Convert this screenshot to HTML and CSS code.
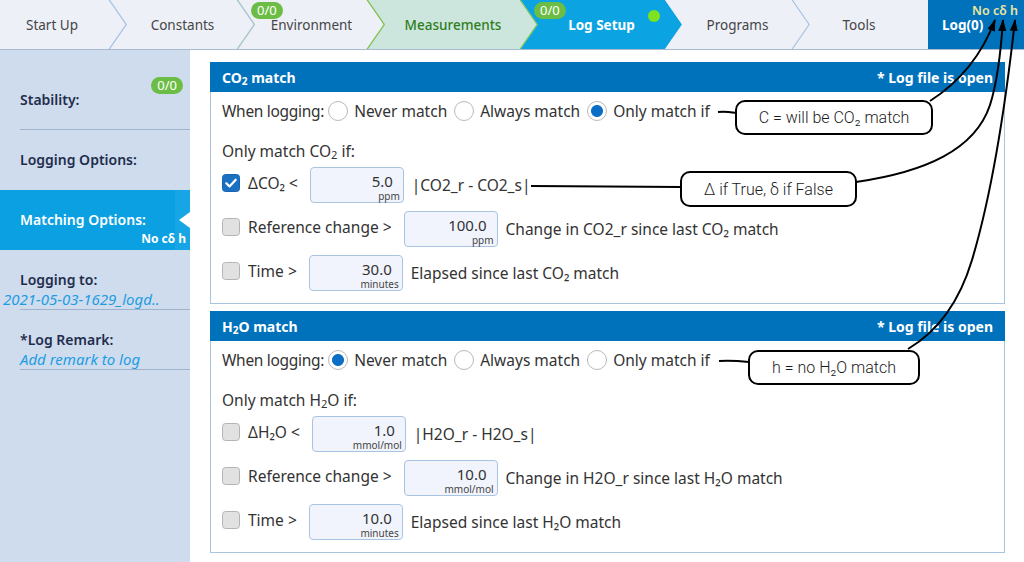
FILE: index.html
```html
<!DOCTYPE html>
<html lang="en">
<head>
<meta charset="utf-8">
<title>Log Setup – Matching Options</title>
<link rel="stylesheet" href="styles.css">
</head>
<body>
<div class="app">
  <nav class="topbar">
    <div class="tabs">
      <div class="tab tab-first line-blue w-startup"><div class="fill">Start Up</div></div>
      <div class="tab line-blue w-constants"><div class="fill">Constants</div></div>
      <div class="tab line-green w-env"><div class="fill">Environment<span class="badge nav-badge">0/0</span></div></div>
      <div class="tab line-green w-meas"><div class="fill fill-green">Measurements</div></div>
      <div class="tab line-none w-logsetup"><div class="fill fill-blue">Log Setup<span class="badge nav-badge">0/0</span><span class="dot"></span></div></div>
      <div class="tab line-blue w-programs"><div class="fill">Programs</div></div>
      <div class="tab tab-last w-tools"><div class="fill">Tools</div></div>
    </div>
    <div class="logbox"><span class="logstate">No cδ h</span><span class="logtitle">Log(0)</span></div>
  </nav>

  <div class="main">
    <aside class="sidebar">
      <div class="item"><span class="label">Stability:</span><span class="badge side-badge">0/0</span></div>
      <div class="item noline"><span class="label">Logging Options:</span></div>
      <div class="item active"><span class="label">Matching Options:</span><span class="sub">No cδ h</span></div>
      <div class="item"><span class="label">Logging to:</span><span class="link file">2021-05-03-1629_logd..</span></div>
      <div class="item"><span class="label">*Log Remark:</span><span class="link">Add remark to log</span></div>
    </aside>

    <div class="content">
      <section class="panel">
        <header class="phead"><span>CO<sub>2</sub> match</span><span>* Log file is open</span></header>
        <div class="pbody">
          <div class="when">
            <span class="wlabel">When logging:</span>
            <span class="radio"></span><span class="ropt">Never match</span>
            <span class="radio"></span><span class="ropt">Always match</span>
            <span class="radio on"></span><span class="ropt">Only match if</span>
          </div>
          <div class="subhead">Only match CO<sub>2</sub> if:</div>
          <div class="crow first">
            <svg class="check" viewBox="0 0 18 18"><rect x="0.5" y="0.5" width="17" height="17" rx="3" fill="#1b70c2" stroke="#1664b2"/><path d="M4.3 9.3 L7.5 12.4 L13.7 5.7" fill="none" stroke="#fff" stroke-width="2.2" stroke-linecap="round" stroke-linejoin="round"/></svg>
            <span class="clabel">ΔCO₂ &lt;</span>
            <div class="num"><span class="v">5.0</span><span class="u">ppm</span></div>
            <span class="desc">|CO2_r - CO2_s|</span>
          </div>
          <div class="crow">
            <svg class="check" viewBox="0 0 18 18"><rect x="0.5" y="0.5" width="17" height="17" rx="3" fill="#e1e1e1" stroke="#b4b4b4"/></svg>
            <span class="clabel">Reference change &gt;</span>
            <div class="num"><span class="v">100.0</span><span class="u">ppm</span></div>
            <span class="desc">Change in CO2_r since last CO₂ match</span>
          </div>
          <div class="crow">
            <svg class="check" viewBox="0 0 18 18"><rect x="0.5" y="0.5" width="17" height="17" rx="3" fill="#e1e1e1" stroke="#b4b4b4"/></svg>
            <span class="clabel">Time &gt;</span>
            <div class="num"><span class="v">30.0</span><span class="u">minutes</span></div>
            <span class="desc">Elapsed since last CO₂ match</span>
          </div>
        </div>
      </section>

      <section class="panel">
        <header class="phead"><span>H<sub>2</sub>O match</span><span>* Log file is open</span></header>
        <div class="pbody">
          <div class="when">
            <span class="wlabel">When logging:</span>
            <span class="radio on"></span><span class="ropt">Never match</span>
            <span class="radio"></span><span class="ropt">Always match</span>
            <span class="radio"></span><span class="ropt">Only match if</span>
          </div>
          <div class="subhead">Only match H<sub>2</sub>O if:</div>
          <div class="crow first">
            <svg class="check" viewBox="0 0 18 18"><rect x="0.5" y="0.5" width="17" height="17" rx="3" fill="#e1e1e1" stroke="#b4b4b4"/></svg>
            <span class="clabel">ΔH₂O &lt;</span>
            <div class="num"><span class="v">1.0</span><span class="u">mmol/mol</span></div>
            <span class="desc">|H2O_r - H2O_s|</span>
          </div>
          <div class="crow">
            <svg class="check" viewBox="0 0 18 18"><rect x="0.5" y="0.5" width="17" height="17" rx="3" fill="#e1e1e1" stroke="#b4b4b4"/></svg>
            <span class="clabel">Reference change &gt;</span>
            <div class="num"><span class="v">10.0</span><span class="u">mmol/mol</span></div>
            <span class="desc">Change in H2O_r since last H₂O match</span>
          </div>
          <div class="crow">
            <svg class="check" viewBox="0 0 18 18"><rect x="0.5" y="0.5" width="17" height="17" rx="3" fill="#e1e1e1" stroke="#b4b4b4"/></svg>
            <span class="clabel">Time &gt;</span>
            <div class="num"><span class="v">10.0</span><span class="u">minutes</span></div>
            <span class="desc">Elapsed since last H₂O match</span>
          </div>
        </div>
      </section>
    </div>
  </div>

  <svg class="annot" viewBox="0 0 1024 562" width="1024" height="562">
    <defs>
      <marker id="ah" viewBox="0 0 12 8" refX="11" refY="4" markerWidth="12" markerHeight="8" markerUnits="userSpaceOnUse" orient="auto">
        <path d="M0,0 L12,4 L0,8 z" fill="#000"/>
      </marker>
    </defs>
    <g fill="none" stroke="#000" stroke-width="2">
      <path d="M718,112 C725,111 730,112 737,113"/>
      <path d="M531,186 L681,187"/>
      <path d="M719,361 C730,360 740,361 749,362"/>
      <path d="M930,101 C955,85 980,60 995,20" marker-end="url(#ah)"/>
      <path d="M856,182 C925,172 975,150 990,105 C998,80 1001,50 1003,20" marker-end="url(#ah)"/>
      <path d="M908,349 C940,330 960,300 972,260 C990,200 1005,110 1015,20" marker-end="url(#ah)"/>
    </g>
  </svg>
  <div class="callout co-c">C = will be CO₂ match</div>
  <div class="callout co-d">Δ if True, δ if False</div>
  <div class="callout co-h">h = no H₂O match</div>
</div>
</body>
</html>
```

FILE: styles.css
```css
* { box-sizing: border-box; margin: 0; padding: 0; }
html, body { width: 1024px; height: 562px; overflow: hidden; }
body {
  font-family: "Noto Sans", "Open Sans", "DejaVu Sans", sans-serif;
  color: #333;
  background: #fff;
}
.app { position: relative; width: 1024px; height: 562px; overflow: hidden; }

/* ---------- top navigation ---------- */
.topbar {
  display: flex;
  height: 50px;
  border-bottom: 1px solid #a8b9d0;
  background: #eef0f8;
}
.tabs { display: flex; flex: 1; height: 49px; }
.tab {
  height: 49px;
  flex: none;
  margin-left: -17px;
  clip-path: polygon(0 0, calc(100% - 17px) 0, 100% 50%, calc(100% - 17px) 100%, 0 100%, 17px 50%);
}
.tab .fill {
  position: relative;
  height: 100%;
  display: flex;
  align-items: center;
  justify-content: center;
  padding: 0 17px;
  background: #eef0f8;
  font-size: 13.5px;
  color: #454545;
  clip-path: polygon(0 0, calc(100% - 18.5px) 0, calc(100% - 1.5px) 50%, calc(100% - 18.5px) 100%, 0 100%, 17px 50%);
}
.tab-first { margin-left: 0; clip-path: polygon(0 0, calc(100% - 17px) 0, 100% 50%, calc(100% - 17px) 100%, 0 100%); }
.tab.tab-first .fill { padding: 0 23px 0 0; clip-path: polygon(0 0, calc(100% - 18.5px) 0, calc(100% - 1.5px) 50%, calc(100% - 18.5px) 100%, 0 100%); }
.tab-last { flex: 1; clip-path: polygon(0 0, 100% 0, 100% 100%, 0 100%, 17px 50%); }
.tab.tab-last .fill { padding: 0 20px 0 17px; clip-path: polygon(0 0, 100% 0, 100% 100%, 0 100%, 17px 50%); }

.line-blue { background: #a9c3e3; }
.line-green { background: #7cc04c; }
.line-none { background: #0ba3e2; }

.w-startup { width: 127px; }
.w-constants { width: 145px; }
.w-env { width: 147px; }
.w-meas { width: 170px; }
.w-logsetup { width: 161px; }
.w-programs { width: 145px; }

.tab .fill-green { color: #2f7e1c; background: #cde6dd; font-weight: 500; }
.tab .fill-blue { color: #fff; font-weight: 700; background: #0ba3e2; }

.badge {
  display: inline-block;
  height: 17px;
  padding: 0 6px;
  border-radius: 9px;
  background: #6cbd45;
  color: #fff;
  font-size: 13px;
  font-weight: 400;
  line-height: 17px;
}
.nav-badge { position: absolute; top: 2px; left: 13px; }
.dot {
  position: absolute;
  top: 10px;
  left: 127px;
  width: 12px;
  height: 12px;
  border-radius: 50%;
  background: #7fe21e;
}

.logbox {
  position: relative;
  width: 96px;
  height: 49px;
  background: #0072bc;
  display: flex;
  align-items: center;
  padding-left: 14px;
}
.logtitle { color: #fff; font-weight: 700; font-size: 13.5px; }
.logstate {
  position: absolute;
  top: 2px;
  right: 6px;
  color: #ece79c;
  font-size: 12.5px;
  font-weight: 600;
}

/* ---------- sidebar ---------- */
.main { display: flex; height: 512px; }
.sidebar {
  width: 190px;
  flex: none;
  background: #cfdcee;
  padding-top: 20px;
}
.item {
  position: relative;
  display: flex;
  flex-direction: column;
  height: 60px;
  margin-left: 20px;
  padding-top: 20px;
  border-bottom: 1px solid #9fb2cc;
}
.item.noline { border-bottom-color: transparent; }
.item .label {
  font-size: 14px;
  font-weight: 600;
  line-height: 20px;
  color: #1f2d4d;
}
.side-badge { position: absolute; top: 7px; right: 7px; }
.item.active {
  margin-left: 0;
  padding-left: 20px;
  border-bottom: none;
  background: linear-gradient(to right, #0aa0e1 calc(100% - 15px), #16a6e6 0);
}
.item.active .label { color: #fff; }
.item.active::after {
  content: "";
  position: absolute;
  right: 0;
  top: 22px;
  border-style: solid;
  border-width: 8px 11px 8px 0;
  border-color: transparent #fff transparent transparent;
}
.item .sub {
  align-self: flex-end;
  margin-right: 4px;
  color: #fff;
  font-size: 12px;
  font-weight: 700;
  line-height: 18px;
}
.link {
  font-size: 15px;
  font-style: italic;
  line-height: 18px;
  color: #1e9ce2;
  white-space: nowrap;
}
.link.file { margin-left: -17px; }

/* ---------- content panels ---------- */
.content {
  flex: 1;
  padding: 12px 19px 0 20px;
}
.panel {
  border: 1px solid #a9c4e0;
  border-top: 0;
}
.panel + .panel { margin-top: 7px; }
.phead {
  height: 30px;
  margin: 0 -1px;
  padding: 0 12px;
  background: #0072bc;
  color: #fff;
  font-size: 14px;
  font-weight: 700;
  display: flex;
  align-items: center;
  justify-content: space-between;
}
sub { font-size: 0.72em; vertical-align: -0.2em; line-height: 0; }
.pbody { padding: 0 11px 12px; font-size: 15.5px; }
.when {
  height: 38px;
  display: flex;
  align-items: center;
}
.wlabel { margin-right: 4px; letter-spacing: -0.3px; }
.radio {
  width: 20px;
  height: 20px;
  flex: none;
  border-radius: 50%;
  border: 1px solid #b9b9b9;
  background: #fff;
  margin-right: 6px;
}
.radio.on { background: radial-gradient(circle, #0a6fc4 0, #0a6fc4 5.5px, #fff 6.5px); }
.ropt { margin-right: 7px; }
.subhead { padding-top: 10px; line-height: 22px; }
.crow {
  display: flex;
  align-items: center;
  height: 36px;
  margin-top: 8px;
}
.crow.first { margin-top: 5px; }
.check { width: 18px; height: 18px; flex: none; margin: 0 8px 4px 0; }
.clabel { margin: 0 12px 4px 0; }
.num {
  width: 94px;
  height: 36px;
  flex: none;
  border: 1px solid #a9c4e0;
  border-radius: 4px;
  background: #f1f4fd;
  display: flex;
  flex-direction: column;
  align-items: flex-end;
  padding: 5px 3px 0 0;
}
.num .v { font-size: 15px; line-height: 17px; padding-right: 7px; }
.num .u { font-size: 10px; line-height: 12px; color: #444; }
.desc { margin-left: 8px; }

/* ---------- annotations ---------- */
.annot {
  position: absolute;
  top: 0;
  left: 0;
  pointer-events: none;
}
.callout {
  position: absolute;
  border: 2px solid #000;
  border-radius: 10px;
  background: #fff;
  font-family: Roboto, "Liberation Sans", sans-serif;
  font-weight: 300;
  font-size: 16px;
  color: #1b1b1b;
  display: flex;
  align-items: center;
  justify-content: center;
}
.co-c { left: 735px; top: 100px; width: 198px; height: 35px; }
.co-d { left: 680px; top: 171px; width: 177px; height: 36px; }
.co-h { left: 748px; top: 350px; width: 172px; height: 35px; }
```
